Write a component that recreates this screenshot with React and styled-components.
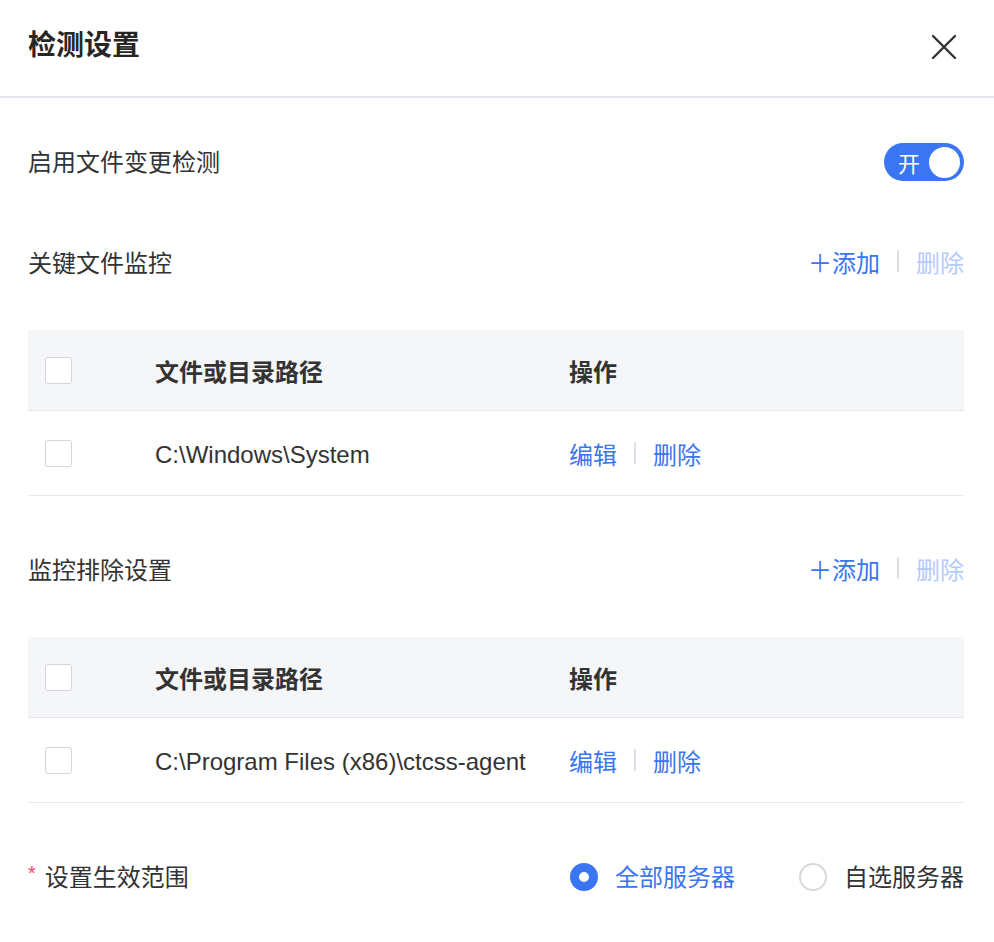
import React, { useState } from "react"
import styled, { createGlobalStyle } from "styled-components"

const GlobalStyle = createGlobalStyle`
  body {
    margin: 0;
    background: #fff;
    font-family: "Liberation Sans", "Noto Sans CJK SC", sans-serif;
    color: #333;
  }
`

const BLUE = "#3a75f2"

const Panel = styled.div`
  width: 994px;
  background: #fff;
`

const Header = styled.div`
  display: flex;
  align-items: center;
  justify-content: space-between;
  height: 96px;
  padding: 0 30px 0 28px;
  border-bottom: 2px solid #e3e6ef;
`

const Title = styled.h1`
  margin: 0 0 10px;
  font-size: 28px;
  font-weight: 700;
  color: #262626;
`

const CloseButton = styled.button`
  display: flex;
  align-items: center;
  justify-content: center;
  width: 32px;
  height: 32px;
  padding: 0;
  margin: 0 4px 2px 0;
  border: none;
  background: none;
  cursor: pointer;
`

const Body = styled.div`
  padding: 0 30px 0 28px;
`

const Line = styled.div`
  display: flex;
  align-items: center;
  justify-content: space-between;
  height: 40px;
  margin-top: ${(p) => p.$top}px;
  font-size: 24px;
  color: #333;
`

const LineText = styled.span`
  display: flex;
  align-items: center;
  padding-bottom: 4px;
`

const Switch = styled.button`
  display: flex;
  align-items: center;
  justify-content: space-between;
  width: 80px;
  height: 38px;
  padding: 0 4px 0 14px;
  border: none;
  border-radius: 19px;
  background: ${(p) => (p.$on ? BLUE : "#c8ccd4")};
  color: #fff;
  font-family: inherit;
  font-size: 22px;
  cursor: pointer;
`

const Knob = styled.span`
  width: 31px;
  height: 31px;
  border-radius: 50%;
  background: #fff;
`

const Actions = styled.div`
  display: flex;
  align-items: center;
  padding-bottom: 4px;
`

const LinkText = styled.a`
  color: ${(p) => (p.$disabled ? "#b3cbfb" : BLUE)};
  font-size: 24px;
  text-decoration: none;
  cursor: ${(p) => (p.$disabled ? "not-allowed" : "pointer")};
`

const Sep = styled.span`
  display: inline-block;
  width: 2px;
  height: 22px;
  margin: 0 17px;
  background: #dcdfe6;
`

const Table = styled.div`
  margin-top: 47px;
`

const Row = styled.div`
  display: grid;
  grid-template-columns: 110px 414px 1fr;
  align-items: center;
  height: ${(p) => (p.$head ? 80 : 84)}px;
  padding-left: 17px;
  background: ${(p) => (p.$head ? "#f5f6f8" : "#fff")};
  border-bottom: 1px solid #e6e9f1;
  font-size: 24px;
  font-weight: ${(p) => (p.$head ? 700 : 400)};
  color: #333;
`

const Check = styled.span`
  display: block;
  width: 27px;
  height: 27px;
  box-sizing: border-box;
  border: 1px solid #d3d5da;
  border-radius: 3px;
  background: #fff;
`

const Cell = styled.div`
  display: flex;
  align-items: center;
  padding-top: ${(p) => (p.$low ? 3 : 0)}px;
`

const Star = styled.span`
  color: #f5475b;
  font-size: 20px;
  margin-right: 9px;
  position: relative;
  top: -2px;
`

const RadioGroup = styled.div`
  display: flex;
  align-items: center;
`

const RadioItem = styled.label`
  display: flex;
  align-items: center;
  margin-left: ${(p) => (p.$first ? 0 : 64)}px;
  font-size: 24px;
  color: ${(p) => (p.$checked ? BLUE : "#333")};
  cursor: pointer;
`

const RadioText = styled.span`
  padding-bottom: 4px;
`

const Dot = styled.span`
  width: 28px;
  height: 28px;
  box-sizing: border-box;
  border-radius: 50%;
  margin-right: 17px;
  border: ${(p) => (p.$checked ? `9px solid ${BLUE}` : "2px solid #d9d9d9")};
  background: #fff;
`

const CloseIcon = () => (
  <svg width="28" height="28" viewBox="0 0 28 28">
    <path d="M3 3 L25 25 M25 3 L3 25" stroke="#333" strokeWidth="2.4" strokeLinecap="round" />
  </svg>
)

const FileTable = ({ path }) => (
  <Table>
    <Row $head>
      <Check />
      <Cell>文件或目录路径</Cell>
      <Cell>操作</Cell>
    </Row>
    <Row>
      <Check />
      <Cell $low>{path}</Cell>
      <Cell>
        <LinkText>编辑</LinkText>
        <Sep />
        <LinkText>删除</LinkText>
      </Cell>
    </Row>
  </Table>
)

const SectionHead = ({ title, top }) => (
  <Line $top={top}>
    <LineText>{title}</LineText>
    <Actions>
      <LinkText>＋添加</LinkText>
      <Sep />
      <LinkText $disabled>删除</LinkText>
    </Actions>
  </Line>
)

const App = () => {
  const [on, setOn] = useState(true)
  const [scope, setScope] = useState("all")
  return (
    <Panel>
      <GlobalStyle />
      <Header>
        <Title>检测设置</Title>
        <CloseButton>
          <CloseIcon />
        </CloseButton>
      </Header>
      <Body>
        <Line $top={44}>
          <LineText>启用文件变更检测</LineText>
          <Switch $on={on} onClick={() => setOn(!on)}>
            {on ? "开" : "关"}
            <Knob />
          </Switch>
        </Line>
        <SectionHead title="关键文件监控" top={61} />
        <FileTable path="C:\Windows\System" />
        <SectionHead title="监控排除设置" top={54} />
        <FileTable path="C:\Program Files (x86)\ctcss-agent" />
        <Line $top={54}>
          <LineText>
            <Star>*</Star>
            设置生效范围
          </LineText>
          <RadioGroup>
            <RadioItem $first $checked={scope === "all"} onClick={() => setScope("all")}>
              <Dot $checked={scope === "all"} />
              <RadioText>全部服务器</RadioText>
            </RadioItem>
            <RadioItem $checked={scope === "some"} onClick={() => setScope("some")}>
              <Dot $checked={scope === "some"} />
              <RadioText>自选服务器</RadioText>
            </RadioItem>
          </RadioGroup>
        </Line>
      </Body>
    </Panel>
  )
}

export default App
